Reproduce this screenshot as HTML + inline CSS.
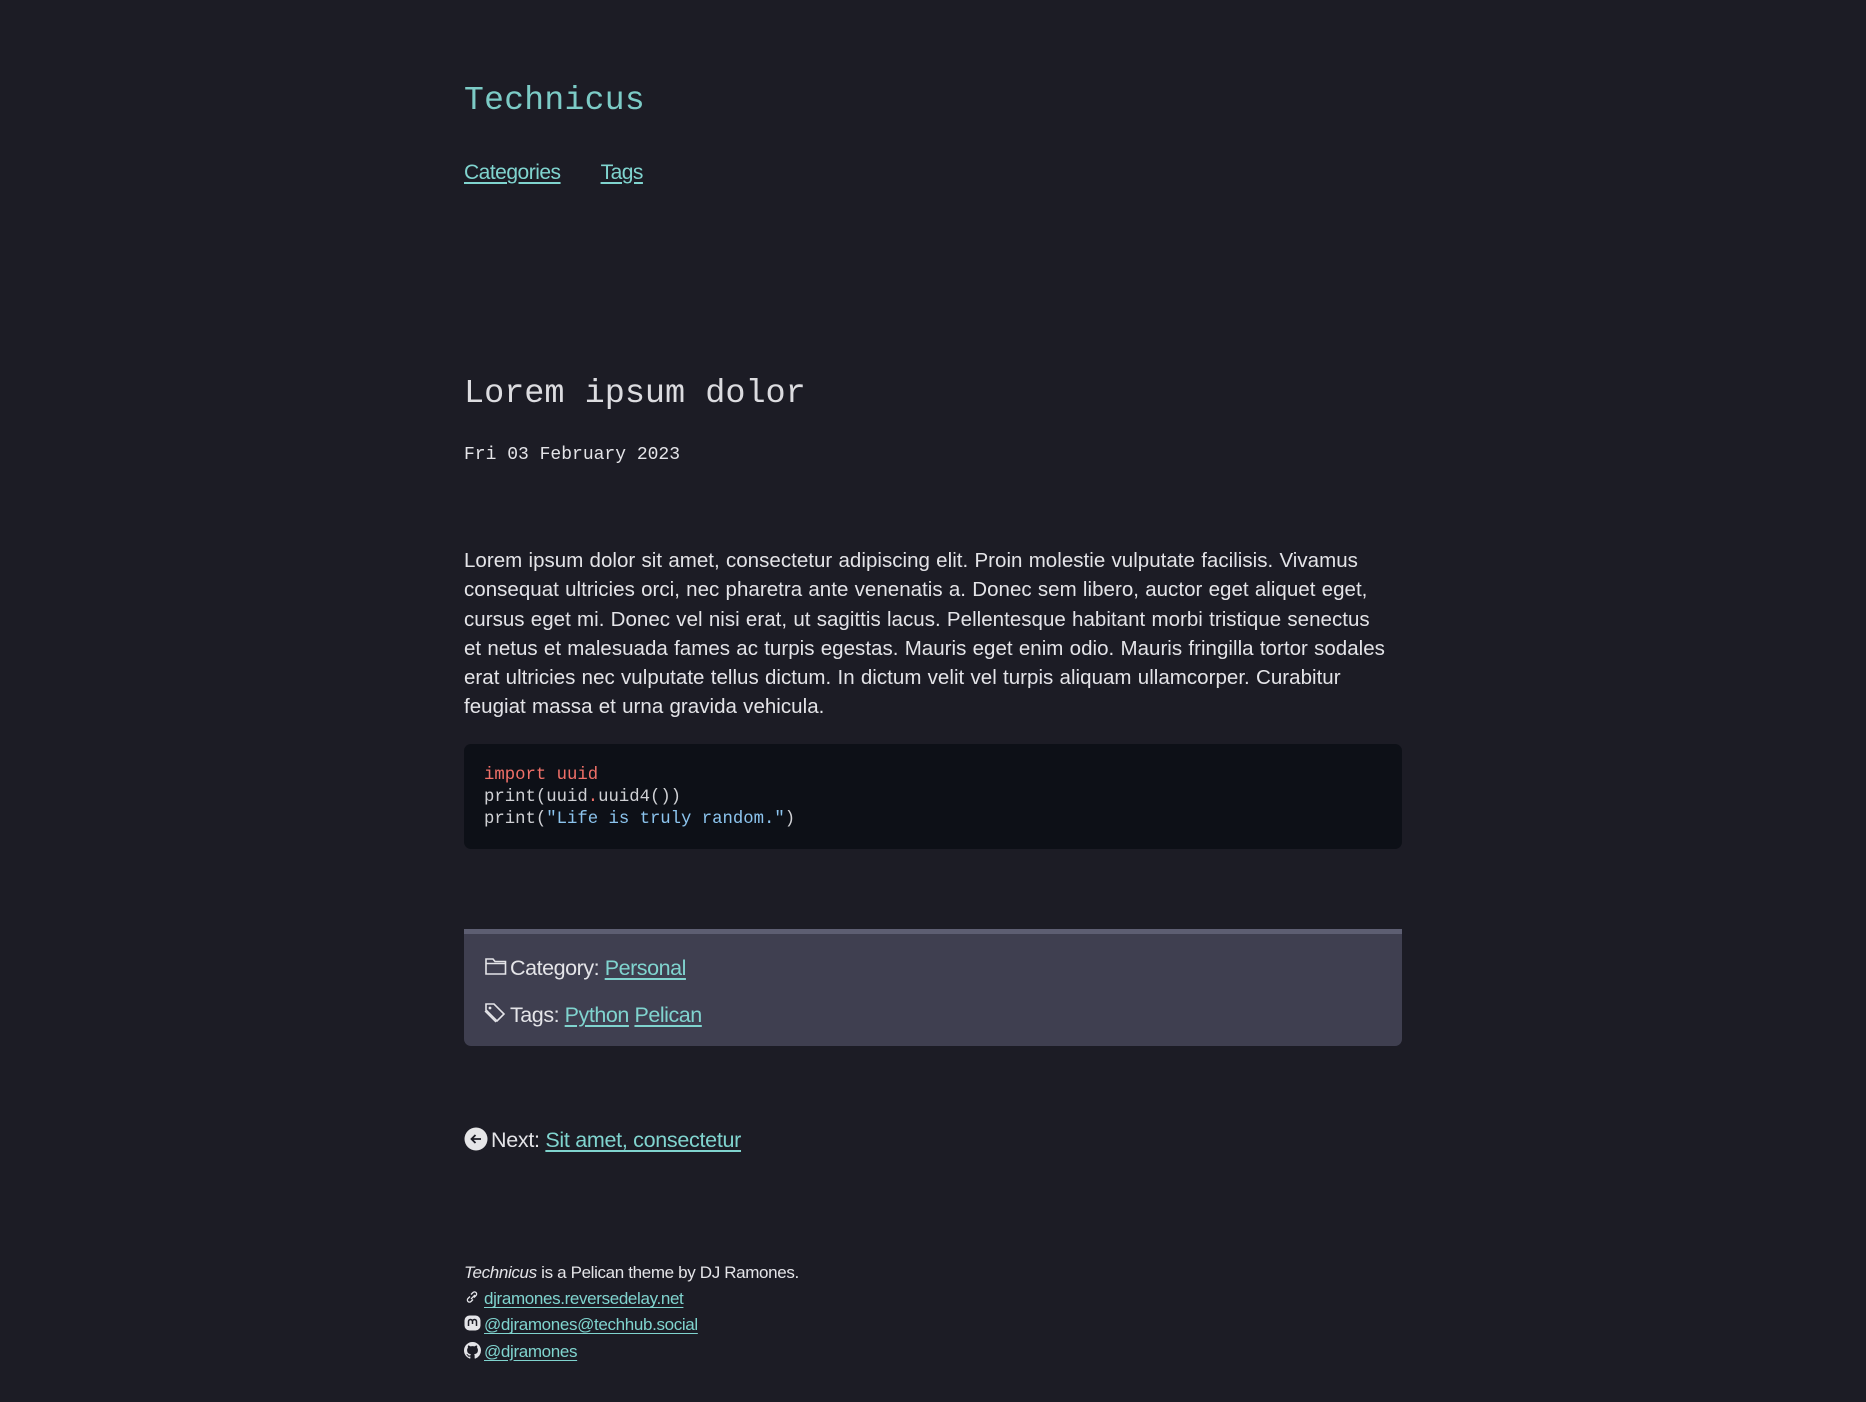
<!DOCTYPE html>
<html><head><meta charset="utf-8"><style>
html,body{margin:0;padding:0;background:#1c1c25;width:1866px;height:1402px;overflow:hidden;}
body{font-family:"Liberation Sans",sans-serif;color:#e4e4e8;position:relative;}
a{color:#80d4cf;text-decoration:underline;text-underline-offset:3px;}
.abs{position:absolute;white-space:nowrap;}
.mono{font-family:"Liberation Mono",monospace;}
.para{left:464px;top:546px;font-size:20.5px;line-height:29.3px;letter-spacing:0.03px;word-spacing:0.5px;}
</style></head><body>
<div class="abs mono" style="left:464px;top:82px;font-size:33px;color:#7ccbc6;letter-spacing:0.3px;">Technicus</div>
<div class="abs" style="left:464px;top:161px;font-size:21px;letter-spacing:-0.5px;"><a href="#">Categories</a><a href="#" style="margin-left:40px">Tags</a></div>
<div class="abs mono" style="left:464px;top:375px;font-size:33.5px;color:#dcdce0;">Lorem ipsum dolor</div>
<div class="abs mono" style="left:464px;top:445px;font-size:18px;color:#e4e4e8;">Fri 03 February 2023</div>
<div class="abs para">Lorem ipsum dolor sit amet, consectetur adipiscing elit. Proin molestie vulputate facilisis. Vivamus<br>consequat ultricies orci, nec pharetra ante venenatis a. Donec sem libero, auctor eget aliquet eget,<br>cursus eget mi. Donec vel nisi erat, ut sagittis lacus. Pellentesque habitant morbi tristique senectus<br>et netus et malesuada fames ac turpis egestas. Mauris eget enim odio. Mauris fringilla tortor sodales<br>erat ultricies nec vulputate tellus dictum. In dictum velit vel turpis aliquam ullamcorper. Curabitur<br>feugiat massa et urna gravida vehicula.</div>
<div class="abs" style="left:464px;top:744px;width:938px;height:105px;background:#0d1017;border-radius:7px;"></div>
<div class="abs mono" style="left:484px;top:765px;font-size:17.3px;line-height:22px;color:#cfd0d4;"><span style="color:#f07068">import uuid</span><br>print(uuid<span style="color:#f07068">.</span>uuid4())<br>print(<span style="color:#8cc4ee">"Life is truly random."</span>)</div>
<div class="abs" style="left:464px;top:929px;width:938px;height:117px;background:#3f3f50;border-top:5px solid #5d5e72;box-sizing:border-box;border-radius:0 0 7px 7px;"></div>
<div class="abs" style="left:484px;top:956px;font-size:21.5px;letter-spacing:-0.45px;color:#e4e4e8;">
<svg width="24" height="20" viewBox="0 0 24 20" style="vertical-align:-1px;margin-right:2px"><path d="M2 3h7l2 2.5h10.5v12.5h-19.5z" fill="none" stroke="#e4e4e8" stroke-width="1.6"/><path d="M2 7.5h19.5" stroke="#e4e4e8" stroke-width="1.4"/></svg>Category: <a href="#">Personal</a></div>
<div class="abs" style="left:484px;top:1002px;font-size:21.5px;letter-spacing:-0.45px;color:#e4e4e8;">
<svg width="24" height="22" viewBox="0 0 24 22" style="vertical-align:-2px;margin-right:2px"><path d="M2 2h8l10 10-7 7-11-11z" fill="none" stroke="#e4e4e8" stroke-width="1.6"/><circle cx="6" cy="6" r="1.4" fill="#e4e4e8"/><path d="M1 9l11 11" stroke="#e4e4e8" stroke-width="1.4" fill="none"/></svg>Tags: <a href="#">Python</a> <a href="#">Pelican</a></div>
<div class="abs" style="left:464px;top:1127px;font-size:21.5px;letter-spacing:-0.3px;color:#e4e4e8;">
<svg width="24" height="24" viewBox="0 0 24 24" style="vertical-align:-4px;margin-right:3px"><circle cx="12" cy="12" r="11.5" fill="#e6e6e8"/><path d="M17 12H7.5M11.5 8l-4 4 4 4" stroke="#1c1c25" stroke-width="1.8" fill="none"/></svg>Next: <a href="#">Sit amet, consectetur</a></div>
<div class="abs" style="left:464px;top:1260px;font-size:17px;line-height:26.2px;letter-spacing:-0.35px;color:#e4e4e8;">
<i>Technicus</i> is a Pelican theme by DJ Ramones.<br>
<svg width="16" height="14" viewBox="0 0 16 14" style="margin-right:4px"><path d="M7 9l4-4M6 6.5l-2 2a2 2 0 003 3l2-2M10 7.5l2-2a2 2 0 00-3-3l-2 2" stroke="#e4e4e8" stroke-width="1.3" fill="none"/></svg><a href="#">djramones.reversedelay.net</a><br>
<svg width="17" height="17" viewBox="0 0 17 17" style="vertical-align:-2px;margin-right:3px"><rect x="0.5" y="0.5" width="16" height="15" rx="5" fill="#e4e4e8"/><path d="M4.5 11V6.5a1.7 1.7 0 014 0V9M8.5 9V6.5a1.7 1.7 0 014 0V11" stroke="#1c1c25" stroke-width="1.5" fill="none"/></svg><a href="#">@djramones@techhub.social</a><br>
<svg width="17" height="17" viewBox="0 0 16 16" style="vertical-align:-2px;margin-right:3px"><path fill="#e4e4e8" d="M8 0C3.58 0 0 3.58 0 8c0 3.54 2.29 6.53 5.47 7.59.4.07.55-.17.55-.38 0-.19-.01-.82-.01-1.49-2.01.37-2.53-.49-2.69-.94-.09-.23-.48-.94-.82-1.13-.28-.15-.68-.52-.01-.53.63-.01 1.08.58 1.23.82.72 1.21 1.87.87 2.33.66.07-.52.28-.87.51-1.07-1.78-.2-3.64-.89-3.64-3.95 0-.87.31-1.59.82-2.15-.08-.2-.36-1.02.08-2.12 0 0 .67-.21 2.2.82.64-.18 1.32-.27 2-.27.68 0 1.36.09 2 .27 1.53-1.04 2.2-.82 2.2-.82.44 1.1.16 1.92.08 2.12.51.56.82 1.27.82 2.15 0 3.07-1.87 3.75-3.65 3.95.29.25.54.73.54 1.48 0 1.07-.01 1.93-.01 2.2 0 .21.15.46.55.38A8.013 8.013 0 0 0 16 8c0-4.42-3.58-8-8-8z"/></svg><a href="#">@djramones</a></div>
</body></html>
